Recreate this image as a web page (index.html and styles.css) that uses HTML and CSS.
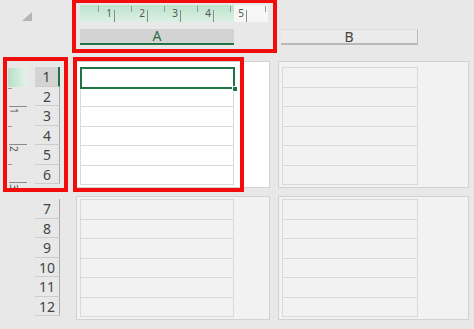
FILE: index.html
```html
<!DOCTYPE html>
<html lang="en">
<head>
  <meta charset="UTF-8">
  <title>Page Layout</title>
  <link rel="stylesheet" href="styles.css">
</head>
<body>
  <div class="sheet">

    <!-- column headers with the horizontal ruler -->
    <div class="top">
      <div class="corner"><span class="corner-mark"></span></div>
      <div class="colhead colhead-a">
        <div class="ruler">
          <div class="inch"><span>1</span></div>
          <div class="inch"><span>2</span></div>
          <div class="inch"><span>3</span></div>
          <div class="inch"><span>4</span></div>
          <div class="inch"><span>5</span></div>
          <div class="inch-tail"></div>
        </div>
        <div class="col-label col-label-active">A</div>
      </div>
      <div class="colhead colhead-b">
        <div class="col-label">B</div>
      </div>
    </div>

    <!-- first row of pages -->
    <div class="band band-first">
      <div class="side">
        <div class="vruler">
          <div class="vseg vseg-first"><div class="vfill"></div></div>
          <div class="vseg"><span>1</span></div>
          <div class="vseg"><span>2</span></div>
          <div class="vseg vseg-last"><span>3</span></div>
        </div>
        <div class="rownums">
          <div class="rownum rownum-active">1</div>
          <div class="rownum">2</div>
          <div class="rownum">3</div>
          <div class="rownum">4</div>
          <div class="rownum">5</div>
          <div class="rownum">6</div>
        </div>
      </div>
      <div class="page page-a page-active">
        <div class="cells cells-a">
          <div class="cell cell-selected"><span class="fill-handle"></span></div>
          <div class="cell"></div>
          <div class="cell"></div>
          <div class="cell"></div>
          <div class="cell"></div>
          <div class="cell"></div>
        </div>
      </div>
      <div class="page page-b">
        <div class="cells cells-b">
          <div class="cell"></div>
          <div class="cell"></div>
          <div class="cell"></div>
          <div class="cell"></div>
          <div class="cell"></div>
          <div class="cell"></div>
        </div>
      </div>
    </div>

    <!-- second row of pages -->
    <div class="band band-second">
      <div class="side">
        <div class="rownums">
          <div class="rownum">7</div>
          <div class="rownum">8</div>
          <div class="rownum">9</div>
          <div class="rownum">10</div>
          <div class="rownum">11</div>
          <div class="rownum">12</div>
        </div>
      </div>
      <div class="page page-a">
        <div class="cells cells-a">
          <div class="cell"></div>
          <div class="cell"></div>
          <div class="cell"></div>
          <div class="cell"></div>
          <div class="cell"></div>
          <div class="cell"></div>
        </div>
      </div>
      <div class="page page-b">
        <div class="cells cells-b">
          <div class="cell"></div>
          <div class="cell"></div>
          <div class="cell"></div>
          <div class="cell"></div>
          <div class="cell"></div>
          <div class="cell"></div>
        </div>
      </div>
    </div>

    <!-- highlight frames -->
    <div class="mark mark-head"></div>
    <div class="mark mark-rows"></div>
    <div class="mark mark-cells"></div>
  </div>
</body>
</html>
```

FILE: styles.css
```css
* {
  box-sizing: border-box;
}
body {
  margin: 0;
  width: 474px;
  height: 329px;
  overflow: hidden;
  background: #e8e8e8;
  font-family: "Noto Sans", "Noto Sans CJK SC", sans-serif;
  color: #444;
}
.sheet {
  position: relative;
  width: 474px;
  height: 329px;
}

/* top strip */
.top {
  display: flex;
  height: 61px;
}
.corner {
  width: 76px;
  padding: 12px 0 0 22px;
}
.corner-mark {
  display: block;
  width: 10px;
  height: 9px;
  background: #b5b5b5;
  clip-path: polygon(100% 0, 100% 100%, 0 100%);
}
.colhead-a {
  width: 194px;
  padding: 5px 2px 0 4px;
}
.colhead-b {
  width: 191px;
  margin-left: 8px;
  padding: 29px 0 0 3px;
}

.ruler {
  display: flex;
  height: 17px;
  padding-left: 2px;
  background: linear-gradient(to bottom, #bde3cd, #dcf0e4) 0 0 / 154px 100% no-repeat, #f6f6f6;
}
.inch {
  position: relative;
  width: 33px;
  flex: none;
  text-align: right;
  padding: 3px 3px 0 0;
  font-size: 10px;
  line-height: 10px;
  color: #555;
}
.inch::before {
  content: "";
  position: absolute;
  left: 16px;
  top: 1px;
  width: 1px;
  height: 6px;
  background: #999;
}
.inch::after {
  content: "";
  position: absolute;
  right: 0;
  top: 5px;
  bottom: 0;
  width: 1px;
  background: #8a8a8a;
}
.inch-tail {
  position: relative;
  flex: 1;
}
.inch-tail::before {
  content: "";
  position: absolute;
  right: 2px;
  top: 1px;
  width: 1px;
  height: 6px;
  background: #999;
}

.col-label {
  height: 16px;
  font-size: 14px;
  line-height: 14px;
  text-align: center;
  border-bottom: 2px solid #b9b9b9;
}
.col-label-active {
  width: 154px;
  margin-top: 7px;
  background: #d3d3d3;
  border-bottom-color: #217346;
  color: #2f6b47;
}
.colhead-b .col-label {
  width: 137px;
  background: #ebebeb;
  border-top: 1px solid #dcdcdc;
  border-right: 1px solid #b9b9b9;
  line-height: 13px;
}

/* page bands */
.band {
  display: flex;
}
.band-first {
  height: 127px;
}
.band-second {
  height: 124px;
  margin-top: 8px;
}
.side {
  display: flex;
  width: 76px;
  padding-left: 8px;
}

.vruler {
  width: 19px;
  padding-top: 7px;
  font-size: 10px;
  color: #555;
}
.vseg {
  position: relative;
  height: 38px;
}
.vseg-first {
  height: 39px;
}
.vseg-last {
  height: 5px;
}
.vseg::before {
  content: "";
  position: absolute;
  left: 0;
  top: 50%;
  width: 4px;
  height: 1px;
  background: #999;
}
.vseg::after {
  content: "";
  position: absolute;
  left: 1px;
  right: 0;
  bottom: 0;
  height: 1px;
  background: #8a8a8a;
}
.vseg-last::before,
.vseg-last::after {
  display: none;
}
.vseg span {
  display: block;
  writing-mode: vertical-rl;
  line-height: 10px;
  padding: 1px 0 0 1px;
  height: 10px;
}
.vfill {
  height: 19px;
  background: linear-gradient(to right, #b6dfc8, #e4f3ea);
}

.rownums {
  width: 25px;
  margin-left: 8px;
  padding-top: 6px;
}
.band-second .rownums {
  margin-left: 27px;
  padding-top: 3px;
}
.rownum {
  height: 19.5px;
  font-size: 14px;
  line-height: 19px;
  text-align: center;
  border-right: 1px solid #a9a9a9;
  border-bottom: 1px solid #cdcdcd;
}
.rownum-active {
  background: #d3d3d3;
  border-right: 2px solid #217346;
}

.page {
  border: 1px solid #d2d2d2;
  background: #f2f2f2;
  padding: 5px 0 0 3px;
}
.band-second .page {
  padding-top: 2px;
}
.page-a {
  width: 194px;
}
.page-b {
  width: 191px;
  margin-left: 8px;
}
.page-active {
  background: #fff;
}

.cells {
  border: 1px solid #d9d9d9;
  border-bottom: none;
}
.cells-a {
  width: 154px;
}
.cells-b {
  width: 136px;
}
.cell {
  height: 19.5px;
  border-bottom: 1px solid #d9d9d9;
}
.cell-selected {
  position: relative;
}
.cell-selected::after {
  content: "";
  position: absolute;
  left: -1px;
  top: -1px;
  right: -2px;
  bottom: -2px;
  border: 2px solid #217346;
}
.fill-handle {
  position: absolute;
  right: -5px;
  bottom: -5px;
  width: 6px;
  height: 6px;
  background: #217346;
  border: 1px solid #fff;
  z-index: 1;
}

/* red frames on top */
.mark {
  position: absolute;
  border: 4px solid #f20d0d;
}
.mark-head {
  left: 72px;
  top: -1px;
  width: 205px;
  height: 54px;
}
.mark-rows {
  left: 3px;
  top: 57px;
  width: 65px;
  height: 135px;
}
.mark-cells {
  left: 73px;
  top: 57px;
  width: 171px;
  height: 135px;
}
```
